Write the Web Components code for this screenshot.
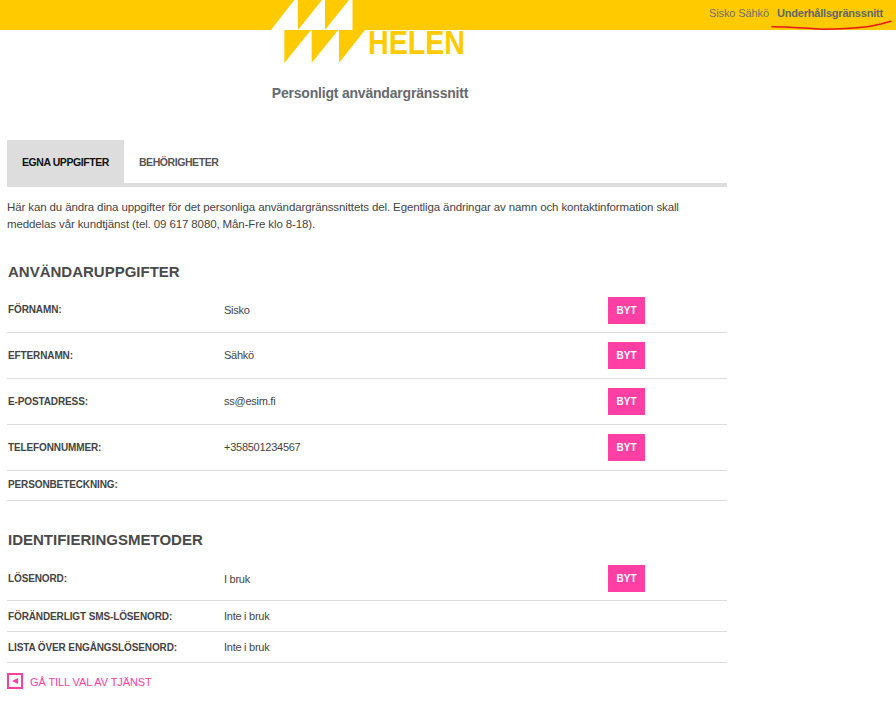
<!DOCTYPE html>
<html lang="sv"><head><meta charset="utf-8"><title>Personligt användargränssnitt</title>
<style>
html,body{margin:0;padding:0;background:#fff}
body{font-family:"Liberation Sans",Arial,sans-serif;color:#444;width:896px;height:701px;overflow:hidden}
main-page{display:block}
</style></head><body>
<main-page>
  <site-header name="Sisko Sähkö" link="Underhållsgränssnitt"></site-header>
  <page-title>Personligt användargränssnitt</page-title>
  <tab-bar><tab-item active>EGNA UPPGIFTER</tab-item><tab-item>BEHÖRIGHETER</tab-item></tab-bar>
  <intro-text>Här kan du ändra dina uppgifter för det personliga användargränssnittets del. Egentliga ändringar av namn och kontaktinformation skall meddelas vår kundtjänst (tel. 09 617 8080, Mån-Fre klo 8-18).</intro-text>
  <info-section heading="ANVÄNDARUPPGIFTER" style="--top:30px">
    <info-row label="FÖRNAMN:" value="Sisko" button></info-row>
    <info-row label="EFTERNAMN:" value="Sähkö" button style="--pt:9px;--pb:9px;--lt:0px"></info-row>
    <info-row label="E-POSTADRESS:" value="ss@esim.fi" button style="--pt:9px;--pb:9px;--lt:0px"></info-row>
    <info-row label="TELEFONNUMMER:" value="+358501234567" button style="--pt:9px;--pb:9px;--lt:0px"></info-row>
    <info-row label="PERSONBETECKNING:" value="" style="--lt:-1px"></info-row>
  </info-section>
  <info-section heading="IDENTIFIERINGSMETODER" style="--top:30px">
    <info-row label="LÖSENORD:" value="I bruk" button style="--vt:0px;--lt:0px"></info-row>
    <info-row label="FÖRÄNDERLIGT SMS-LÖSENORD:" value="Inte i bruk" style="--h:31px;--vt:0px;--lt:0px"></info-row>
    <info-row label="LISTA ÖVER ENGÅNGSLÖSENORD:" value="Inte i bruk" style="--h:31px;--vt:0px;--lt:0px"></info-row>
  </info-section>
  <back-link>GÅ TILL VAL AV TJÄNST</back-link>
</main-page>
<script>
function def(name, html){
  customElements.define(name, class extends HTMLElement{
    connectedCallback(){
      if(this.shadowRoot) return;
      const r=this.attachShadow({mode:'open'});
      r.innerHTML=typeof html==='function'?html(this):html;
    }
  });
}
def('main-page','<style>:host{display:block}</style><slot></slot>');
def('site-header',h=>`<style>
:host{display:flex;position:relative;height:30px;background:#ffcb00;justify-content:flex-end;align-items:center;font-size:11px;letter-spacing:-.1px;color:#6f6f6f;padding-right:13px;box-sizing:border-box;width:896px}
.n{margin-right:8px;position:relative;top:-2px}
.l{font-weight:700;position:relative;top:-2px;color:#62666c;letter-spacing:-.2px}
.logo{position:absolute;left:265px;top:0;overflow:visible}
.ul{position:absolute;left:770px;top:18px}
.h{font:700 34px "Liberation Sans",Arial,sans-serif;fill:#ffcb00}
</style>
<svg class="logo" width="210" height="70" viewBox="265 0 210 70" aria-label="Helen">
<g fill="#fff"><path d="M271 30 294.3 0H298V30Z"/><path d="M298 30 322 0H325V30Z"/><path d="M325 30 349 0H352.5V30Z"/></g>
<g fill="#ffcb00"><path d="M284.3 30V63L311 30Z"/><path d="M311.7 30V63L338.3 30Z"/><path d="M339 30V63L365 30Z"/></g>
<text class="h" x="368" y="53.5" textLength="97" lengthAdjust="spacingAndGlyphs">HELEN</text>
</svg>
<span class="n">${h.getAttribute('name')}</span><span class="l">${h.getAttribute('link')}</span>
<svg class="ul" width="124" height="14" viewBox="770 18 124 14"><path d="M772 26.8C785 26.6 800 28 823 29.2C840 29 855 28 867 26.7C873 26 878 24.5 881 24C885 22.6 888 21.8 891 21.2" fill="none" stroke="#e8141c" stroke-width="1.5" stroke-linecap="round"/></svg>`);
def('page-title',`<style>:host{display:block;width:740px;text-align:center;margin-top:55px;font-size:14px;letter-spacing:-.2px;line-height:16px;font-weight:700;color:#666a70}</style><slot></slot>`);
def('tab-bar',`<style>:host{display:flex;margin:39px 0 0 7px;width:720px;border-bottom:4px solid #ddd}</style><slot></slot>`);
def('tab-item',h=>`<style>:host{display:block;height:43px;line-height:44px;padding:0 15px;font-size:10.5px;letter-spacing:-.43px;font-weight:700;color:${h.hasAttribute('active')?'#111':'#555'};background:${h.hasAttribute('active')?'#ddd':'transparent'}}</style><slot></slot>`);
def('intro-text',`<style>:host{display:block;margin:12px 0 0 7px;width:700px;font-size:11.5px;letter-spacing:-.115px;line-height:17px;color:#444}</style><slot></slot>`);
def('info-section',h=>`<style>:host{display:block;margin:var(--top) 0 0 7px;width:720px}
h2{margin:0 0 0 1px;font-size:15px;line-height:17px;font-weight:700;color:#4a4a4a}
.b{padding-top:7px}</style><h2>${h.getAttribute('heading')}</h2><div class="b"><slot></slot></div>`);
def('info-row',h=>{const b=h.hasAttribute('button');return `<style>:host{display:grid;grid-template-columns:217px 384px 1fr;align-items:center;box-sizing:border-box;border-bottom:1px solid #ddd;padding:${b?'var(--pt,10px) 0 var(--pb,8px)':'0'};min-height:${b?'46px':'var(--h,30px)'};color:#444}
.k{font-size:10px;letter-spacing:-.12px;font-weight:700;padding-left:1px;color:#444;position:relative;top:var(--lt,-1px)}
.v{font-size:11px;letter-spacing:-.26px;position:relative;top:var(--vt,-1px)}
button{all:unset;display:block;width:37px;height:27px;background:#ff3fa4;color:#fff;font:700 10px/26px "Liberation Sans",Arial,sans-serif;text-align:center}</style>
<span class="k">${h.getAttribute('label')}</span><span class="v">${h.getAttribute('value')}</span>${b?'<button>BYT</button>':''}`});
def('back-link',`<style>:host{display:flex;align-items:center;gap:7px;margin:10px 0 0 7px;font-size:11px;letter-spacing:-.1px;color:#ff3fa4}
.i{box-sizing:border-box;width:16px;height:16px;border:2px solid #ff3fa4;display:flex;align-items:center;justify-content:center}
.t{position:relative;top:1px}
svg{display:block}</style>
<span class="i"><svg width="8" height="8" viewBox="0 0 8 8"><path d="M1 4 7 1V7Z" fill="#ff3fa4"/></svg></span><span class="t"><slot></slot></span>`);
</script>
</body></html>
